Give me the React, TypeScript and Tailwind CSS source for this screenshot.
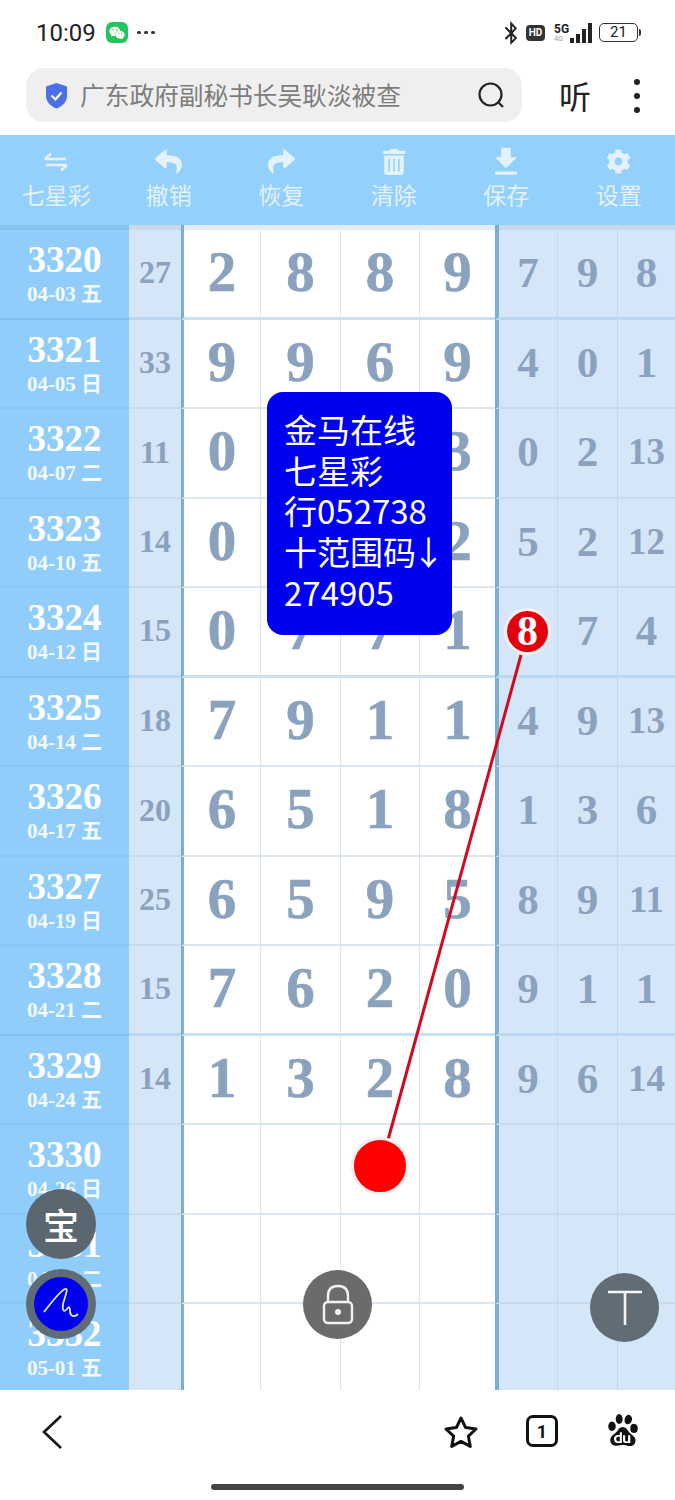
import React from 'react';
import { FaReply, FaShare, FaTrashAlt, FaCog, FaBluetoothB, FaWeixin } from 'react-icons/fa';
import { MdFileDownload } from 'react-icons/md';
import { SiBaidu } from 'react-icons/si';

const SERIF = { fontFamily: '"Liberation Serif", "Noto Sans CJK SC", serif' };
const CJK = { fontFamily: '"Noto Sans CJK SC", sans-serif' };

type Row = { no: string; date: string; sum?: string; main?: string[]; right?: string[] };

const rows: Row[] = [
  { no: '3320', date: '04-03 五', sum: '27', main: ['2', '8', '8', '9'], right: ['7', '9', '8'] },
  { no: '3321', date: '04-05 日', sum: '33', main: ['9', '9', '6', '9'], right: ['4', '0', '1'] },
  { no: '3322', date: '04-07 二', sum: '11', main: ['0', '4', '4', '3'], right: ['0', '2', '13'] },
  { no: '3323', date: '04-10 五', sum: '14', main: ['0', '6', '6', '2'], right: ['5', '2', '12'] },
  { no: '3324', date: '04-12 日', sum: '15', main: ['0', '7', '7', '1'], right: ['8', '7', '4'] },
  { no: '3325', date: '04-14 二', sum: '18', main: ['7', '9', '1', '1'], right: ['4', '9', '13'] },
  { no: '3326', date: '04-17 五', sum: '20', main: ['6', '5', '1', '8'], right: ['1', '3', '6'] },
  { no: '3327', date: '04-19 日', sum: '25', main: ['6', '5', '9', '5'], right: ['8', '9', '11'] },
  { no: '3328', date: '04-21 二', sum: '15', main: ['7', '6', '2', '0'], right: ['9', '1', '1'] },
  { no: '3329', date: '04-24 五', sum: '14', main: ['1', '3', '2', '8'], right: ['9', '6', '14'] },
  { no: '3330', date: '04-26 日' },
  { no: '3331', date: '04-28 二' },
  { no: '3332', date: '05-01 五' },
];

const GRID = 'grid grid-cols-[129px_52px_80px_80px_79px_75px_63px_60px_57px]';

const ExchangeIcon = () => (
  <svg width="24" height="20" viewBox="0 0 24 20" fill="none" stroke="#e3f2fd" strokeWidth="2.6">
    <path d="M1 7H22" />
    <path d="M1 7L7 1.5" />
    <path d="M23 13H2" />
    <path d="M23 13L17 18.5" />
  </svg>
);

const tools: { label: string; icon: React.ReactNode }[] = [
  { label: '七星彩', icon: <ExchangeIcon /> },
  { label: '撤销', icon: <FaReply size={27} color="#e3f2fd" /> },
  { label: '恢复', icon: <FaShare size={27} color="#e3f2fd" /> },
  { label: '清除', icon: <FaTrashAlt size={26} color="#e3f2fd" /> },
  { label: '保存', icon: <MdFileDownload size={38} color="#e3f2fd" /> },
  { label: '设置', icon: <FaCog size={25} color="#e3f2fd" /> },
];

function StatusBar() {
  return (
    <div className="h-[66px] flex items-center justify-between pl-[36px] pr-[34px] pb-[1px]">
      <div className="flex items-center">
        <span className="text-[24px] text-[#222]" style={{ fontFamily: 'Roboto, sans-serif' }}>10:09</span>
        <span className="ml-[10px] w-[22px] h-[21px] rounded-[6px] bg-[#22c55e] flex items-center justify-center">
          <FaWeixin size={16} color="#fff" />
        </span>
        <span className="ml-[9px] flex gap-[3px]">
          <i className="w-[4px] h-[3px] rounded-full bg-[#333]" />
          <i className="w-[4px] h-[3px] rounded-full bg-[#333]" />
          <i className="w-[4px] h-[3px] rounded-full bg-[#333]" />
        </span>
      </div>
      <div className="flex items-center">
        <FaBluetoothB size={24} color="#222" />
        <span className="ml-[3px] w-[19px] h-[16px] rounded-[4px] bg-[#333] text-white text-[10px] font-bold flex items-center justify-center" style={{ fontFamily: 'Roboto, sans-serif' }}>HD</span>
        <div className="ml-[9px] w-[17px] flex flex-col items-start leading-none">
          <span className="text-[12px] font-bold text-[#222] leading-[12px]" style={{ fontFamily: 'Roboto, sans-serif' }}>5G</span>
          <span className="text-[7px] text-[#999] leading-[8px]" style={{ fontFamily: 'Roboto, sans-serif' }}>4G</span>
        </div>
        <div className="flex items-end gap-[2px] h-[20px] -ml-[1px]">
          <i className="w-[4px] h-[5px] bg-[#222]" />
          <i className="w-[4px] h-[9px] bg-[#222]" />
          <i className="w-[4px] h-[14px] bg-[#222]" />
          <i className="w-[4px] h-[20px] bg-[#222]" />
        </div>
        <div className="ml-[7px] w-[39px] h-[19px] rounded-[5px] border border-[#333] flex items-center justify-center text-[15px] text-[#222]" style={{ fontFamily: 'Roboto, sans-serif' }}>21</div>
        <i className="ml-[1px] w-[2px] h-[7px] rounded-r bg-[#333]" />
      </div>
    </div>
  );
}

function AddressBar() {
  return (
    <div className="h-[69px] flex items-start pl-[26px] pt-[2px]">
      <div className="w-[496px] h-[54px] rounded-[18px] bg-[#efefef] flex items-center pl-[19px] pr-[17px]">
        <svg width="23" height="27" viewBox="0 0 23 27">
          <path d="M11.5 1L22 4.5V14C22 20 17 24.5 11.5 26.5C6 24.5 1 20 1 14V4.5Z" fill="#4a6fe8" />
          <path d="M6.5 13.5L10.5 17.5L16.5 10.5" fill="none" stroke="#fff" strokeWidth="2.2" />
        </svg>
        <span className="ml-[12px] text-[24.7px] text-[#7d7d7d] whitespace-nowrap" style={CJK}>广东政府副秘书长吴耿淡被查</span>
        <svg className="ml-auto" width="28" height="28" viewBox="0 0 28 28" fill="none" stroke="#222" strokeWidth="2.2">
          <circle cx="13.5" cy="13.5" r="11" />
          <path d="M21 21L26 26" />
        </svg>
      </div>
      <span className="ml-[37px] mt-[7px] text-[32px] leading-[40px] text-[#222]" style={CJK}>听</span>
      <div className="ml-[43px] mt-[11px] flex flex-col gap-[8px]">
        <i className="w-[6px] h-[6px] rounded-full bg-[#222]" />
        <i className="w-[6px] h-[6px] rounded-full bg-[#222]" />
        <i className="w-[6px] h-[6px] rounded-full bg-[#222]" />
      </div>
    </div>
  );
}

function Toolbar() {
  return (
    <div className="h-[90px] bg-[#94d0fc] grid grid-cols-6">
      {tools.map((t) => (
        <div key={t.label} className="flex flex-col items-center">
          <div className="h-[45px] pt-[8px] flex items-center justify-center">{t.icon}</div>
          <span className="text-[23px] leading-[28px] text-[#e3f2fd]" style={CJK}>{t.label}</span>
        </div>
      ))}
    </div>
  );
}

function TableRow({ row, index }: { row: Row; index: number }) {
  const thick = index % 4 === 0;
  const line = thick ? 'border-b-[3px] border-b-[#c9e0f3]' : 'border-b-2 border-b-[#dde6ee]';
  const sideLine = thick ? 'border-b-[3px] border-b-[#bcd8f0]' : 'border-b-2 border-b-[#c6dbee]';
  const cellBase = 'flex items-center justify-center text-[#8aa2bd] font-bold leading-none';
  const main = row.main ?? ['', '', '', ''];
  const right = row.right ?? ['', '', ''];
  return (
    <div className={`${GRID} h-[89.5px]`} style={SERIF}>
      <div className={`bg-[#90cdfb] flex flex-col items-center pt-[9px] text-white font-bold border-b-2 ${thick ? 'border-b-[#7fbfef]' : 'border-b-[#87c6f5]'}`}>
        <span className="text-[37px] leading-[42px]">{row.no}</span>
        <span className="text-[21px] leading-[26px] opacity-90">{row.date}</span>
      </div>
      <div className={`${cellBase} ${sideLine} bg-[#d5e6f8] text-[32px] pb-[2px]`}>{row.sum}</div>
      {main.map((d, i) => (
        <div
          key={i}
          className={`${cellBase} ${line} text-[57px] pb-[4px] [-webkit-text-stroke:0.6px_#8aa2bd] bg-white border-r border-r-[#d9e6ef] ${i === 0 ? 'border-l-[3px] border-l-[#7aafd0]' : ''} ${i === 3 ? 'border-r-0' : ''}`}
        >
          {d}
        </div>
      ))}
      {right.map((d, i) => (
        <div
          key={i}
          className={`${cellBase} ${sideLine} bg-[#d5e6f8] pb-[2px] border-r border-r-[#c2d8ea] ${d.length > 1 ? 'text-[37px]' : 'text-[43px]'} ${i === 0 ? 'border-l-[4px] border-l-[#7aafd0]' : ''} ${i === 2 ? 'border-r-0' : ''}`}
        >
          {d}
        </div>
      ))}
    </div>
  );
}

function Table() {
  return (
    <div className="h-[1165px] overflow-hidden">
      <div className={`${GRID} h-[5px]`}>
        <div className="bg-[#86c2ef]" />
        <div className="bg-[#c8d9ea]" />
        <div className="bg-[#e3ecf3] border-l-[3px] border-l-[#7aafd0]" />
        <div className="bg-[#e3ecf3]" />
        <div className="bg-[#e3ecf3]" />
        <div className="bg-[#e3ecf3]" />
        <div className="bg-[#c8d9ea] border-l-[4px] border-l-[#7aafd0]" />
        <div className="bg-[#c8d9ea]" />
        <div className="bg-[#c8d9ea]" />
      </div>
      {rows.map((r, i) => (
        <TableRow key={r.no} row={r} index={i} />
      ))}
    </div>
  );
}

function BottomBar() {
  return (
    <div className="h-[110px] bg-white flex flex-col">
      <div className="h-[94px] flex items-start pt-[24px] pl-[41px]">
        <svg width="22" height="36" viewBox="0 0 22 36" fill="none" stroke="#111" strokeWidth="2.6">
          <path d="M20 2L3 18L20 34" />
        </svg>
        <svg className="ml-[380px] mt-[1px]" width="36" height="34" viewBox="0 0 36 34" fill="none" stroke="#111" strokeWidth="3" strokeLinejoin="round">
          <path d="M18 3L22.6 12.6L33 14L25.4 21.2L27.3 31.4L18 26.4L8.7 31.4L10.6 21.2L3 14L13.4 12.6Z" />
        </svg>
        <div className="ml-[47px] mt-[1px] w-[32px] h-[32px] rounded-[7px] border-[3px] border-[#111] flex items-center justify-center text-[18px] font-bold text-[#111]" style={{ fontFamily: 'Roboto, sans-serif' }}>1</div>
        <SiBaidu className="ml-[49px]" size={32} color="#111" />
      </div>
      <div className="ml-[211px] w-[253px] h-[6px] rounded-full bg-[#444]" />
    </div>
  );
}

export default function App() {
  return (
    <div className="relative w-[675px] h-[1500px] bg-white overflow-hidden">
      <StatusBar />
      <AddressBar />
      <Toolbar />
      <Table />
      <BottomBar />

      {/* popup */}
      <div
        className="absolute left-[267px] top-[392px] w-[185px] h-[243px] rounded-[16px] bg-[#0000f0] text-white text-[33px] leading-[40.7px] pl-[17px] pt-[17px] whitespace-nowrap"
        style={CJK}
      >
        <div>金马在线</div>
        <div>七星彩</div>
        <div>行052738</div>
        <div>十范围码<span className="-ml-[4px]">↓</span></div>
        <div>274905</div>
      </div>

      {/* line between the balls */}
      <svg className="absolute left-0 top-0 pointer-events-none" width="675" height="1500">
        <line x1="521" y1="655" x2="388" y2="1140" stroke="#d00a1e" strokeWidth="3" />
      </svg>

      <div className="absolute left-[504px] top-[608px] w-[47px] h-[47px] rounded-full bg-[#e2000f] border-[3px] border-[#fdeeee] flex items-center justify-center text-white text-[42px] font-bold" style={SERIF}>8</div>
      <div className="absolute left-[351px] top-[1137px] w-[58px] h-[58px] rounded-full bg-[#ff0000] border-[3px] border-[#f4eeee]" />

      {/* floating buttons */}
      <div className="absolute left-[26px] top-[1189px] w-[70px] h-[70px] rounded-full bg-[#5a6670] flex items-center justify-center text-white text-[36px] font-medium" style={CJK}>宝</div>
      <div className="absolute left-[26px] top-[1269px] w-[70px] h-[70px] rounded-full bg-[#5f6b75] flex items-center justify-center">
        <div className="w-[54px] h-[54px] rounded-full bg-[#0000f0] flex items-center justify-center">
          <svg width="40" height="36" viewBox="0 0 40 36" fill="none" stroke="#dfe8ff" strokeWidth="1.8">
            <path d="M3 26C10 17 19 5 24 3C28 2 24 10 22 18C21 24 23 27 26 23C28 20 29 21 29 25C29 30 33 32 37 28" />
          </svg>
        </div>
      </div>
      <div className="absolute left-[303px] top-[1270px] w-[69px] h-[69px] rounded-full bg-[#6b6b6b] flex items-center justify-center">
        <svg width="32" height="42" viewBox="0 0 32 42" fill="none" stroke="#f2f2f2" strokeWidth="2.4">
          <path d="M6 18V12C6 5 10 2 16 2C22 2 26 5 26 12V18" />
          <rect x="2" y="18" width="28" height="21" rx="4" />
          <circle cx="16" cy="28" r="3" fill="#f2f2f2" stroke="none" />
        </svg>
      </div>
      <div className="absolute left-[590px] top-[1273px] w-[69px] h-[69px] rounded-full bg-[#626c74] flex items-center justify-center">
        <svg width="36" height="36" viewBox="0 0 36 36" fill="none" stroke="#f5f5f5" strokeWidth="2.6">
          <path d="M1 2H35" />
          <path d="M18 2V35" />
        </svg>
      </div>
    </div>
  );
}
